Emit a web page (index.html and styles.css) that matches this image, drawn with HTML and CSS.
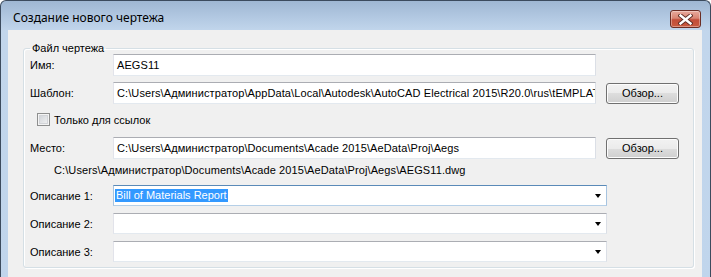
FILE: index.html
```html
<!DOCTYPE html>
<html lang="ru">
<head>
  <meta charset="UTF-8">
  <title>Создание нового чертежа</title>
  <link rel="stylesheet" href="styles.css">
</head>
<body>
  <div class="window">
    <div class="titlebar">
      <span class="title">Создание нового чертежа</span>
      <button class="close" title="Закрыть">
        <svg width="15" height="11" viewBox="0 0 15 11">
          <path d="M2.5 1.5 L12.5 9.5 M12.5 1.5 L2.5 9.5" stroke="#5a2a22" stroke-width="4.2" stroke-linecap="square"/>
          <path d="M2.5 1.5 L12.5 9.5 M12.5 1.5 L2.5 9.5" stroke="#fff" stroke-width="2.4" stroke-linecap="square"/>
        </svg>
      </button>
    </div>
    <div class="client">
      <fieldset class="group">
        <legend>Файл чертежа</legend>
        <div class="row">
          <span class="lbl">Имя:</span>
          <div class="field">AEGS11</div>
        </div>
        <div class="row row-tpl">
          <span class="lbl">Шаблон:</span>
          <div class="field">C:\Users\Администратор\AppData\Local\Autodesk\AutoCAD Electrical 2015\R20.0\rus\tEMPLAT</div>
          <button class="btn">Обзор...</button>
        </div>
        <div class="row row-check">
          <span class="check"></span>
          <span>Только для ссылок</span>
        </div>
        <div class="row row-place">
          <span class="lbl">Место:</span>
          <div class="field">C:\Users\Администратор\Documents\Acade 2015\AeData\Proj\Aegs</div>
          <button class="btn">Обзор...</button>
        </div>
        <div class="row row-path">C:\Users\Администратор\Documents\Acade 2015\AeData\Proj\Aegs\AEGS11.dwg</div>
        <div class="row row-desc first">
          <span class="lbl">Описание 1:</span>
          <div class="combo focused"><span class="sel">Bill of Materials Report</span><span class="arrow"></span></div>
        </div>
        <div class="row row-desc">
          <span class="lbl">Описание 2:</span>
          <div class="combo"><span class="sel"></span><span class="arrow"></span></div>
        </div>
        <div class="row row-desc">
          <span class="lbl">Описание 3:</span>
          <div class="combo"><span class="sel"></span><span class="arrow"></span></div>
        </div>
      </fieldset>
    </div>
  </div>
</body>
</html>
```

FILE: styles.css
```css
body { margin: 0; font-family: "Liberation Sans", Arial, sans-serif; font-size: 11px; color: #000; overflow: hidden; }
.window { width: 711px; height: 300px; box-sizing: border-box; border: 1px solid #3c4b5e; border-bottom: none; border-radius: 6px 6px 0 0; padding: 0 8px 0 7px; background: linear-gradient(#9fb7d3, #b4cae3 18px, #c2d6ec 30px, #c0d5ec); }
.titlebar { height: 29px; display: flex; align-items: flex-end; justify-content: space-between; padding-bottom: 2px; box-sizing: border-box; }
.title { font-family: "Noto Sans", sans-serif; font-size: 12px; line-height: 16px; padding-left: 5px; padding-bottom: 2px; color: #000; }
.close { width: 31px; height: 18px; margin-right: 1px; padding: 0; border: 1px solid #6b2d24; border-radius: 3px; display: flex; align-items: center; justify-content: center; background: linear-gradient(#e8a99c, #d98573 45%, #c24d39 55%, #c95a3f); box-shadow: inset 0 0 0 1px rgba(255,255,255,0.35); }
.client { background: #f0f0f0; height: 300px; padding: 12px 0 0 15px; }
.group { width: 671px; box-sizing: border-box; margin: 0; border: 1px solid #d5dfe5; border-radius: 3px; padding: 0 0 5px 6px; box-shadow: 1px 1px 0 #fff, inset 1px 1px 0 #fff; }
.group legend { padding: 0 2px; margin-left: 0; line-height: 12px; }
.row { display: flex; align-items: center; height: 22px; }
.lbl { width: 83px; flex: none; }
.field { width: 483px; height: 22px; box-sizing: border-box; border: 1px solid; border-color: #abadb3 #dbdfe6 #e3e9ef #e2e3ea; background: #fff; padding: 0 3px; line-height: 20px; white-space: nowrap; overflow: hidden; flex: none; letter-spacing: 0.1px; }
.btn { margin-left: 10px; width: 73px; height: 21px; box-sizing: border-box; padding: 0; border: 1px solid #707070; border-radius: 3px; background: linear-gradient(#f2f2f2, #ebebeb 50%, #dddddd 50%, #cfcfcf); box-shadow: inset 0 0 0 1px #fcfcfc; font: inherit; color: #000; }
.row-tpl { margin-top: 6px; }
.row-check { margin-top: 9px; height: 13px; padding-left: 7px; gap: 4px; }
.check { width: 13px; height: 13px; box-sizing: border-box; border: 1px solid #8e8f8f; background: linear-gradient(135deg, #cbcfd5, #f6f6f6); box-shadow: inset 0 0 0 1px #f4f4f4, inset 0 0 0 2px #d2d4d8; }
.row-place { margin-top: 11px; }
.row-path { margin-top: 4px; height: 14px; padding-left: 24px; white-space: nowrap; letter-spacing: 0.1px; }
.row-desc { margin-top: 7px; height: 21px; }
.row-desc.first { margin-top: 8px; }
.combo { width: 494px; height: 21px; box-sizing: border-box; border: 1px solid; border-color: #abadb3 #dbdfe6 #e3e9ef #e2e3ea; background: #fff; display: flex; align-items: center; justify-content: space-between; padding: 0 5px 0 1px; }
.combo.focused { border-color: #5a8ab8 #a7c4e0 #b5cfe7 #a7c4e0; }
.sel { line-height: 13px; padding: 0 1px; }
.combo.focused .sel { background: #3399ff; color: #fff; }
.arrow { width: 0; height: 0; border-left: 3.5px solid transparent; border-right: 3.5px solid transparent; border-top: 4px solid #000; }
```
